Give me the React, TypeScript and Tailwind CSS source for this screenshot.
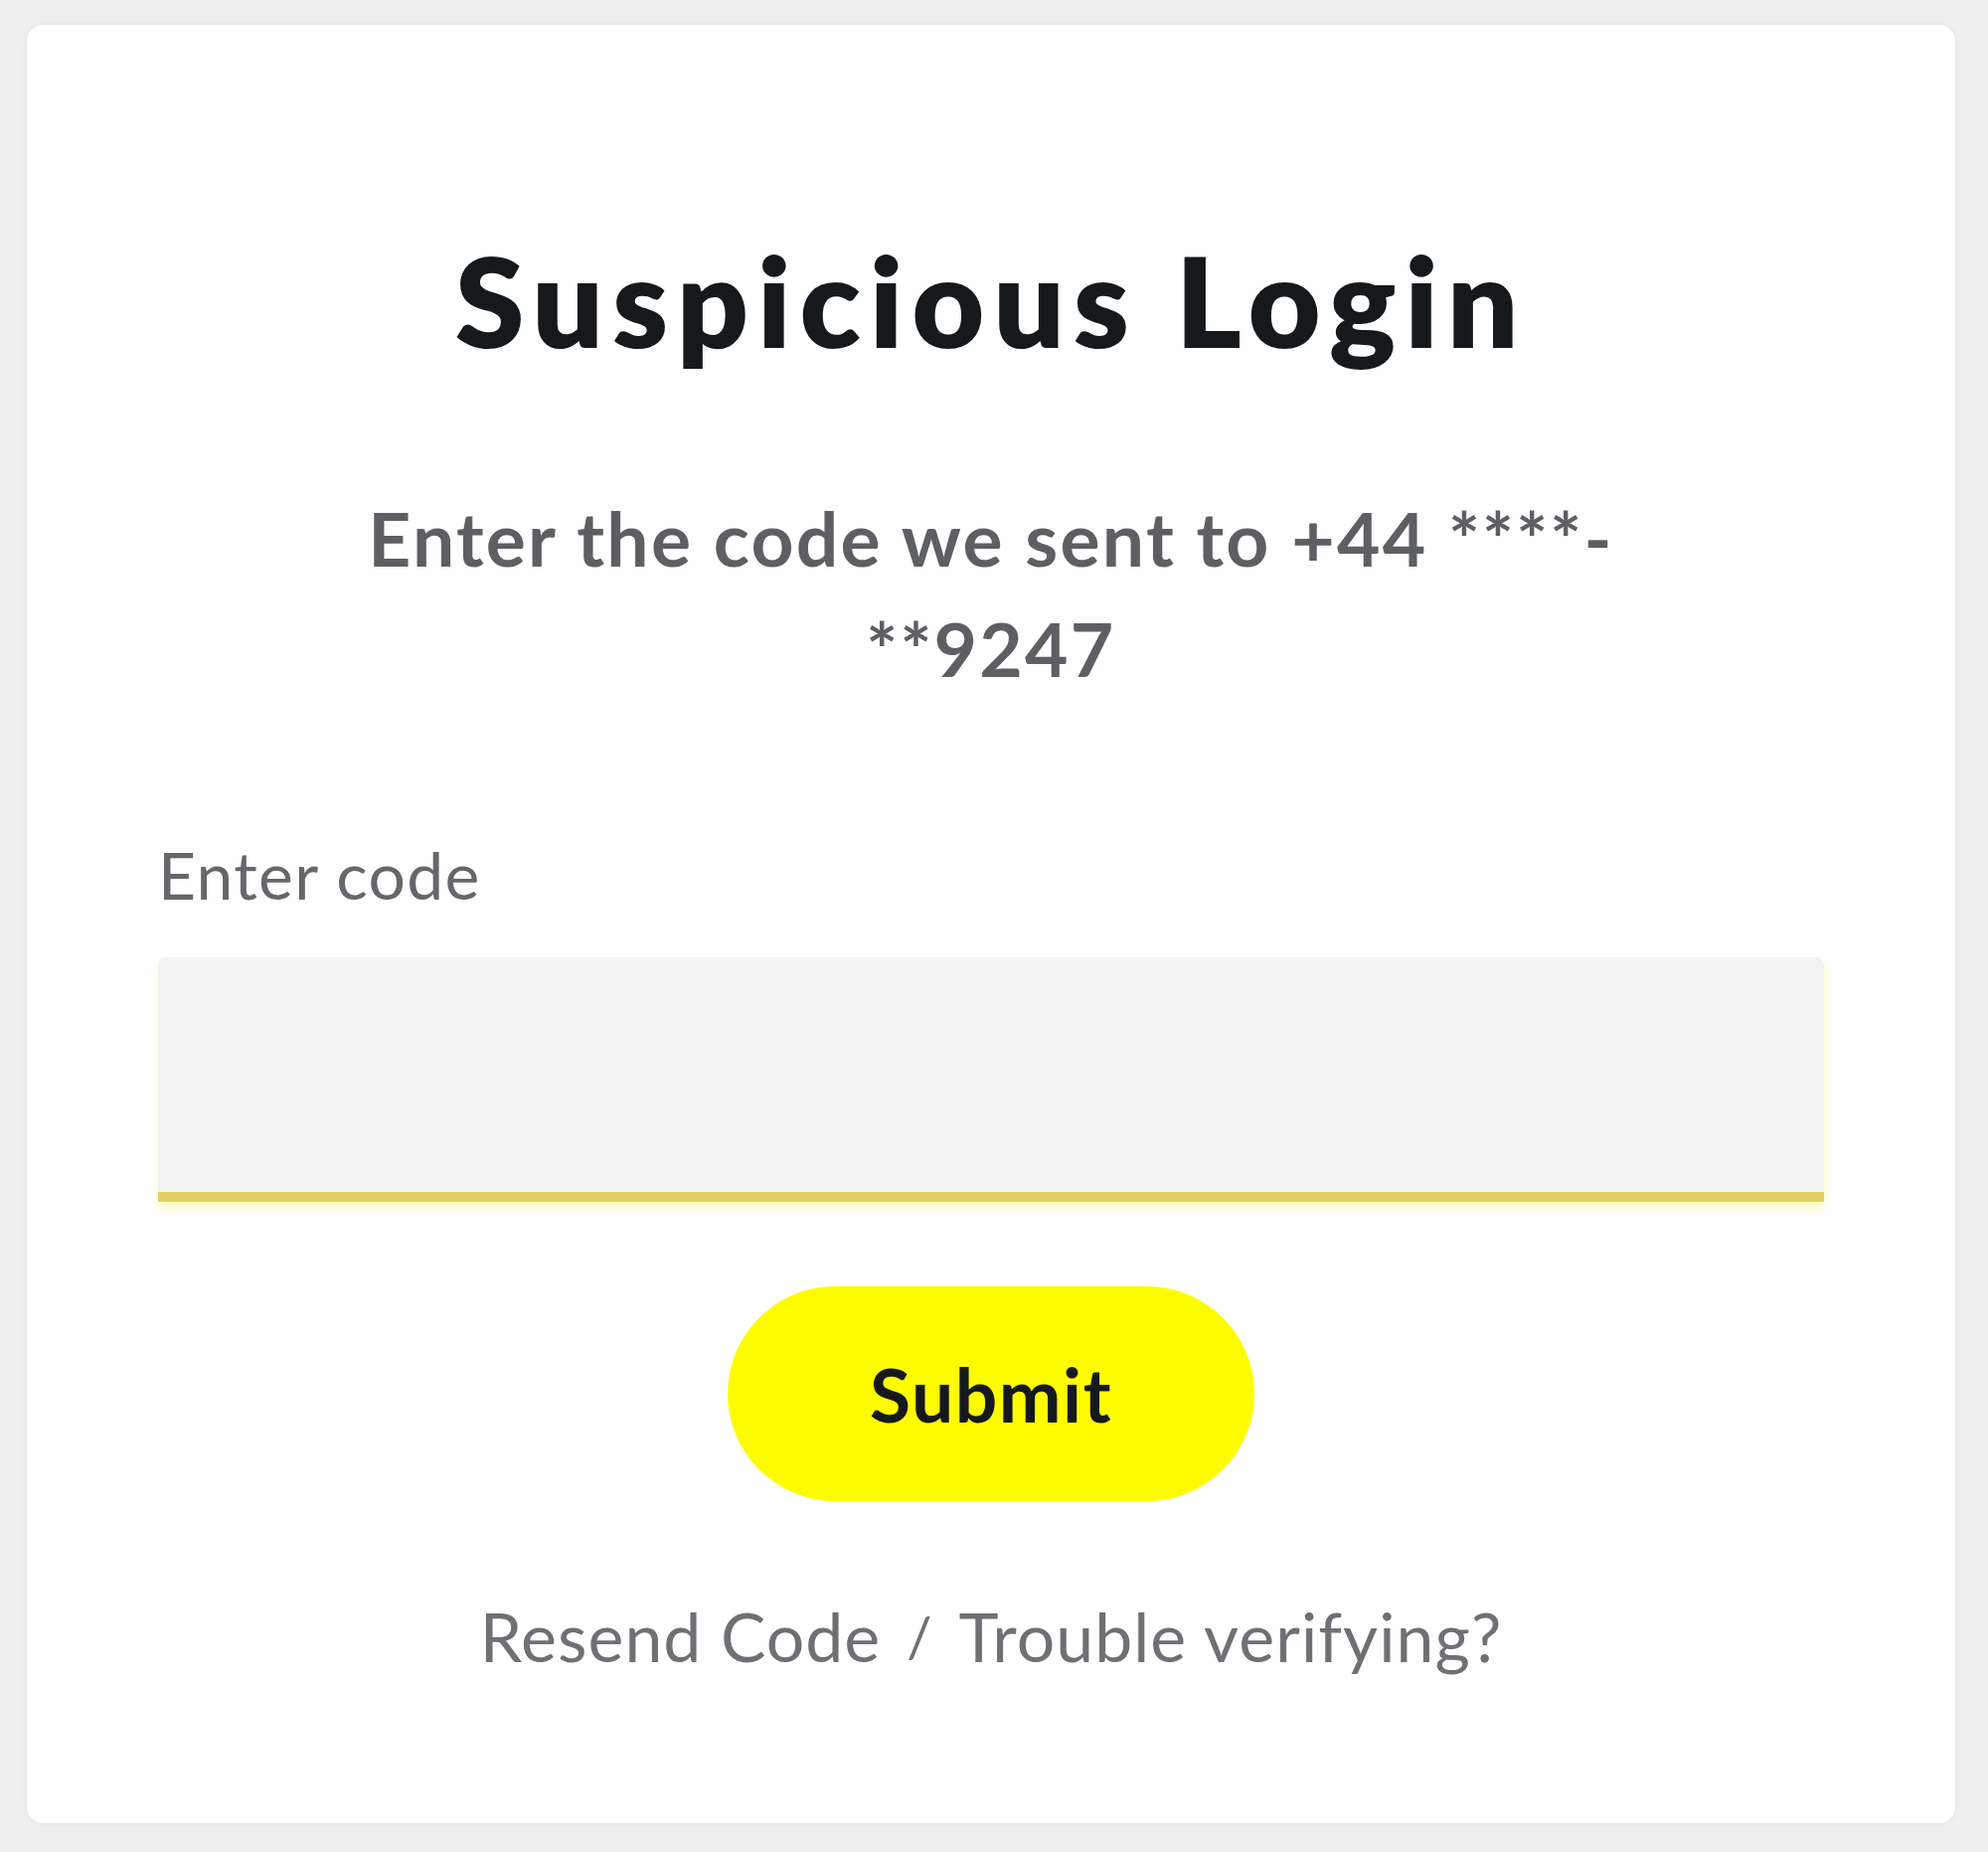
export default function App() {
  return (
    <div className="min-h-screen w-full bg-[#efefef] pl-[27px] pr-[33px] pt-[25px] pb-[28px] font-['Lato','Liberation_Sans',sans-serif]">
      <div className="flex w-full flex-col items-center rounded-[16px] bg-white px-[132px] pt-[214px] pb-[154px] shadow-[0_0_6px_rgba(0,0,0,0.06)]">
        <h1 className="text-[126px] font-extrabold leading-none tracking-[0.07em] text-[#16191c]">
          Suspicious Login
        </h1>
        <p className="mt-[121px] text-center text-[75px] font-bold leading-[111px] tracking-[0.03em] text-[#5d5f63]">
          Enter the code we sent to +44 ****-
          <br />
          **9247
        </p>

        <label className="mt-[139px] self-stretch text-left text-[66px] leading-none tracking-[0.02em] text-[#65676b]">
          Enter code
        </label>
        <input
          type="text"
          aria-label="Enter code"
          className="mt-[50px] h-[246px] w-full rounded-t-[8px] border-b-[10px] border-[#e3cf62] bg-[#f2f2f2] shadow-[0_6px_10px_rgba(255,240,100,0.45)] outline-none"
        />

        <button className="mt-[85px] flex h-[216px] w-[530px] items-center justify-center rounded-full bg-[#fffc00] text-[75px] font-bold tracking-[0.02em] text-[#16191c]">
          Submit
        </button>

        <div className="mt-[102px] flex items-center gap-[26px] text-[68px] leading-none tracking-[0.015em] text-[#6e7074]">
          <a href="#">Resend Code</a>
          <span className="text-[56px]">/</span>
          <a href="#">Trouble verifying?</a>
        </div>
      </div>
    </div>
  );
}
